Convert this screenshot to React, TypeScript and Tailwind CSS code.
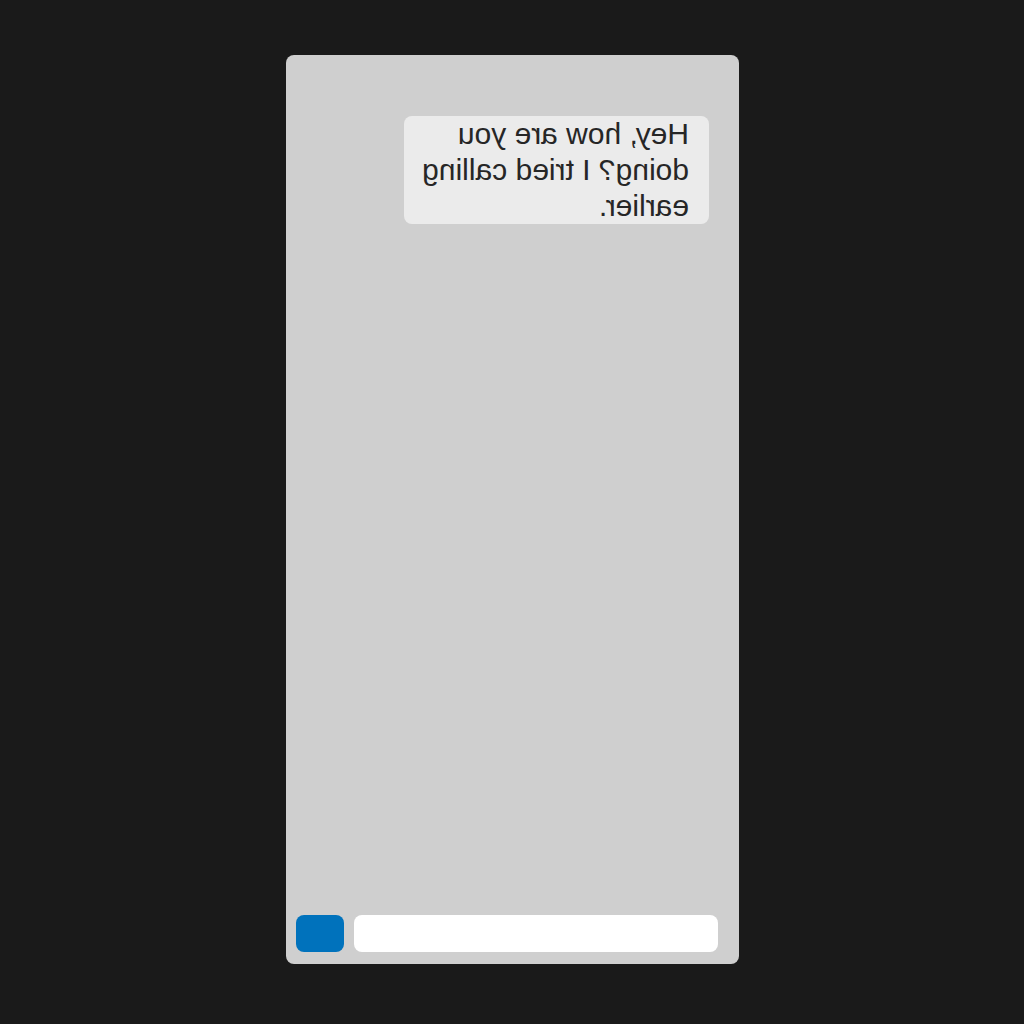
import React from "react";

export default function App() {
  return (
    <main className="flex min-h-screen flex-col items-center bg-[#1a1a1a] px-4 pt-[55px] pb-[60px] font-['Liberation_Sans',Arial,sans-serif] text-[#262626]">
      <section
        aria-label="Conversation"
        className="flex w-full max-w-[453px] flex-1 -scale-x-100 flex-col rounded-lg bg-[#cfcfcf]"
      >
        <div className="flex-1 pt-[61px] pr-4 pl-[30px]">
          <p className="max-w-[305px] rounded-lg bg-[#ebebeb] pr-3 pl-5 text-[30px] leading-9">
            Hey, how are you doing? I tried calling earlier.
          </p>
        </div>
        <form className="flex gap-2.5 pr-2.5 pb-3 pl-[21px]" onSubmit={(e) => e.preventDefault()}>
          <input
            type="text"
            aria-label="Message"
            className="h-[37px] min-w-0 flex-1 rounded-lg bg-white px-3 text-xl outline-none"
          />
          <button type="submit" aria-label="Send" className="h-[37px] w-12 rounded-lg bg-[#0072bc]" />
        </form>
      </section>
    </main>
  );
}
